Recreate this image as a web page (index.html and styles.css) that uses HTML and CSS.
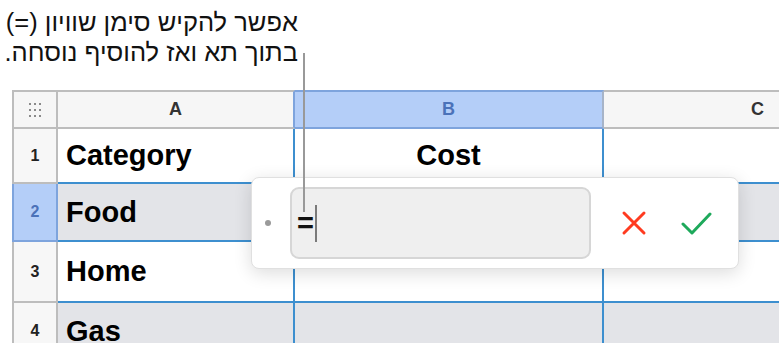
FILE: index.html
```html
<!DOCTYPE html>
<html lang="he">
<head>
    <meta charset="UTF-8">
    <meta name="viewport" content="width=device-width, initial-scale=1.0">
    <title>Formula entry</title>
    <link rel="stylesheet" href="styles.css">
</head>
<body>
    <div class="page">
        <p class="note" dir="rtl">אפשר להקיש סימן שוויון (=)<br>בתוך תא ואז להוסיף נוסחה.</p>

        <div class="sheet" dir="ltr">
            <div class="cell corner">
                <svg width="14" height="16" viewBox="0 0 14 16">
                    <g fill="#8a8a8a">
                        <rect x="1" y="1" width="2" height="2"/><rect x="6" y="1" width="2" height="2"/><rect x="11" y="1" width="2" height="2"/>
                        <rect x="1" y="7" width="2" height="2"/><rect x="6" y="7" width="2" height="2"/><rect x="11" y="7" width="2" height="2"/>
                        <rect x="1" y="13" width="2" height="2"/><rect x="6" y="13" width="2" height="2"/><rect x="11" y="13" width="2" height="2"/>
                    </g>
                </svg>
            </div>
            <div class="cell head before-sel">A</div>
            <div class="cell head sel">B</div>
            <div class="cell head">C</div>

            <div class="cell num">1</div>
            <div class="cell data">Category</div>
            <div class="cell data center">Cost</div>
            <div class="cell data"></div>

            <div class="cell num sel">2</div>
            <div class="cell data alt">Food</div>
            <div class="cell data alt"></div>
            <div class="cell data alt"></div>

            <div class="cell num">3</div>
            <div class="cell data">Home</div>
            <div class="cell data"></div>
            <div class="cell data"></div>

            <div class="cell num">4</div>
            <div class="cell data alt">Gas</div>
            <div class="cell data alt"></div>
            <div class="cell data alt"></div>
        </div>

        <!-- formula editor floating over the table -->
        <div class="editor" dir="ltr">
            <span class="dot"></span>
            <div class="formula"><span class="eq">=</span><span class="caret"></span></div>
            <svg class="cancel" width="26" height="26" viewBox="0 0 26 26">
                <path d="M3 3 L23 23 M23 3 L3 23" stroke="#ff3b20" stroke-width="3" stroke-linecap="round" fill="none"/>
            </svg>
            <svg class="accept" width="31" height="24" viewBox="0 0 31 24">
                <path d="M2 13 L11 22 L29 3" stroke="#1ea95b" stroke-width="3" stroke-linecap="round" stroke-linejoin="round" fill="none"/>
            </svg>
        </div>

        <div class="callout"></div>
    </div>
</body>
</html>
```

FILE: styles.css
```css
body {
    margin: 0;
    background: #fff;
    font-family: 'Liberation Sans', 'DejaVu Sans', sans-serif;
    color: #111;
}

.page {
    position: relative;
    width: 779px;
    height: 343px;
    overflow: hidden;
}

.note {
    width: 298px;
    margin: 0;
    padding-top: 7px;
    font-size: 25.5px;
    line-height: 30px;
    white-space: nowrap;
    color: #111;
    text-align: right;
}

.sheet {
    display: grid;
    grid-template-columns: 46px 237px 309px 309px;
    grid-template-rows: 39px 55px 58px 61px 58px;
    margin: 23px 0 0 12px;
    width: 901px;
}

.cell {
    box-sizing: border-box;
    display: flex;
    align-items: center;
}

.corner,
.head {
    justify-content: center;
    background: #f6f6f6;
    border-top: 2px solid #bdbdbd;
    border-right: 2px solid #bdbdbd;
    border-bottom: 2px solid #bdbdbd;
    font-size: 18px;
    font-weight: bold;
    color: #333;
}

.corner {
    border-left: 2px solid #bdbdbd;
}

.head.before-sel {
    border-right-color: #7ea4dd;
}

.head.sel {
    background: #b4cef8;
    border-top-color: #7ea4dd;
    border-bottom-color: #7ea4dd;
    border-right-color: #a7b4c8;
    color: #4b72b9;
}

.num {
    justify-content: center;
    background: #f7f7f7;
    border-left: 2px solid #bdbdbd;
    border-right: 2px solid #bdbdbd;
    border-bottom: 2px solid #bdbdbd;
    font-size: 16px;
    font-weight: bold;
    color: #222;
}

.num.sel {
    background: #b4cef8;
    border-color: #7ea4dd;
    color: #4b72b9;
}

.data {
    padding-left: 8px;
    border-right: 2px solid #3d8fcf;
    border-bottom: 2px solid #3d8fcf;
    font-size: 29px;
    font-weight: bold;
    color: #000;
}

.data.center {
    justify-content: center;
    padding-left: 0;
}

.data.alt {
    background: #e3e4e8;
}

.editor {
    position: absolute;
    left: 251px;
    top: 177px;
    box-sizing: border-box;
    width: 488px;
    height: 92px;
    display: flex;
    align-items: center;
    padding-left: 13px;
    background: #fff;
    border: 1px solid #e0e0e0;
    border-radius: 8px;
    box-shadow: 0 4px 18px rgba(0, 0, 0, 0.14);
}

.dot {
    width: 6px;
    height: 6px;
    border-radius: 50%;
    background: #9a9a9a;
    margin-right: 19px;
}

.formula {
    box-sizing: border-box;
    width: 301px;
    height: 72px;
    display: flex;
    align-items: center;
    padding-left: 5px;
    background: #efefef;
    border: 2px solid #d6d6d6;
    border-radius: 9px;
}

.eq {
    font-size: 29px;
    font-weight: bold;
    color: #111;
}

.caret {
    display: inline-block;
    width: 2px;
    height: 37px;
    margin-left: 1px;
    background: #7a7a7a;
}

.cancel {
    margin-left: 30px;
}

.accept {
    margin-left: 34px;
}

.callout {
    position: absolute;
    left: 303px;
    top: 53px;
    width: 2px;
    height: 159px;
    background: #999;
}
```
